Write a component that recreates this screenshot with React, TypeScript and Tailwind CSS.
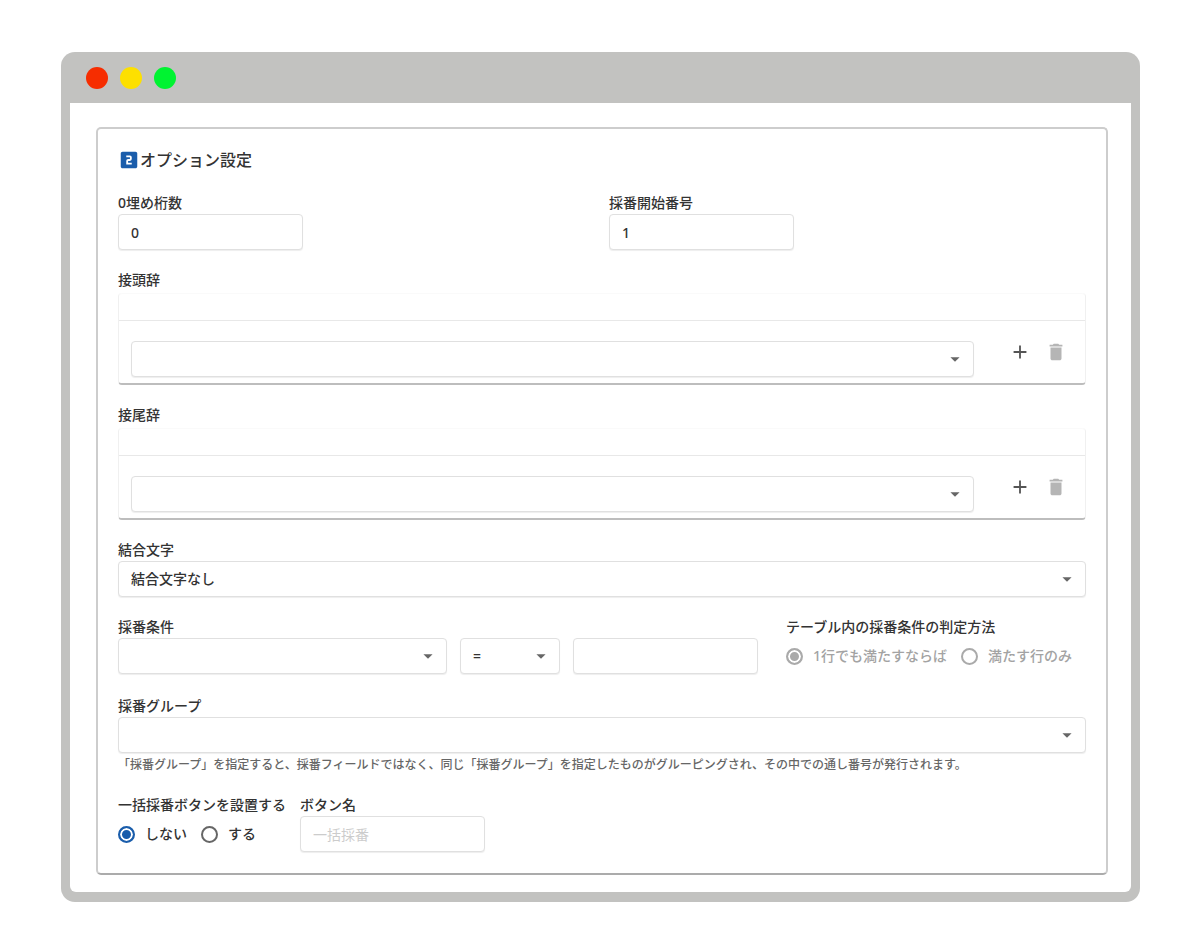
import { useState } from "react";
import type { ReactNode } from "react";
import { MdAdd, MdArrowDropDown, MdDelete, MdLooksTwo } from "react-icons/md";

const fieldClass =
  "h-9 w-full rounded-[4px] border border-[#e0e0e0] bg-white px-3 text-sm font-medium text-[#333] shadow-[0_1px_1px_#eeeeee] outline-none focus:border-[#1a5dab]";

type FieldProps = {
  label: string;
  htmlFor: string;
  className?: string;
  children: ReactNode;
};

function Field({ label, htmlFor, className = "", children }: FieldProps) {
  return (
    <div className={className}>
      <label htmlFor={htmlFor} className="block pb-0.5 leading-[18px] whitespace-nowrap">
        {label}
      </label>
      {children}
    </div>
  );
}

type SelectProps = {
  id: string;
  options: string[];
  label?: string;
};

function Select({ id, options, label }: SelectProps) {
  return (
    <div className="grid w-full items-center">
      <select id={id} aria-label={label} className={`${fieldClass} col-start-1 row-start-1 appearance-none`}>
        {options.map((option) => (
          <option key={option}>{option}</option>
        ))}
      </select>
      <MdArrowDropDown
        size={22}
        className="pointer-events-none col-start-1 row-start-1 mr-2 justify-self-end text-[#666]"
        aria-hidden="true"
      />
    </div>
  );
}

type RadioProps = {
  name: string;
  label: string;
  checked: boolean;
  disabled?: boolean;
  onChange: () => void;
};

function Radio({ name, label, checked, disabled = false, onChange }: RadioProps) {
  return (
    <label className={`flex items-center gap-2.5 whitespace-nowrap ${disabled ? "text-[#a3a3a3]" : ""}`}>
      <input
        type="radio"
        name={name}
        checked={checked}
        disabled={disabled}
        onChange={onChange}
        className="size-[17px] shrink-0 appearance-none rounded-full border-2 border-[#666] bg-white checked:border-[#1a5dab] checked:bg-[#1a5dab] checked:shadow-[inset_0_0_0_2px_#fff] disabled:border-[#aaa] checked:disabled:bg-[#aaa]"
      />
      {label}
    </label>
  );
}

function AffixTable({ id, label }: { id: string; label: string }) {
  return (
    <Field label={label} htmlFor={id}>
      <div className="mt-0.5 rounded-[4px] border-x border-b-2 border-x-[#f0f0f0] border-b-[#bdbdbd]">
        <div className="h-7 rounded-t-[4px] border-t border-b border-t-[#fafafa] border-b-[#e8e8e8]" />
        <div className="flex items-start pt-[13px] pr-[11px] pb-[6px] pl-3">
          <div className="flex-1 pt-[7px]">
            <Select id={id} options={[""]} />
          </div>
          <div className="ml-7 flex text-[#555]">
            <button type="button" aria-label="追加" className="flex size-9 items-center justify-center">
              <MdAdd size={22} />
            </button>
            <button
              type="button"
              aria-label="削除"
              disabled
              className="flex size-9 items-center justify-center text-[#b5b5b5]"
            >
              <MdDelete size={22} />
            </button>
          </div>
        </div>
      </div>
    </Field>
  );
}

export default function App() {
  const [bulkButton, setBulkButton] = useState(false);
  const [anyRow, setAnyRow] = useState(true);

  return (
    <div className="min-h-screen bg-white py-[52px] pr-[60px] pl-[61px] font-['Noto_Sans','Noto_Sans_CJK_JP',sans-serif] text-sm font-medium text-[#333]">
      <div className="rounded-[14px] bg-[#c2c2c0] px-[9px] pb-[10px]">
        <div className="flex h-[51px] items-center gap-3 px-4">
          <span className="size-[22px] rounded-full bg-[#f62d00]" />
          <span className="size-[22px] rounded-full bg-[#fde000]" />
          <span className="size-[22px] rounded-full bg-[#00f331]" />
        </div>

        <div className="rounded-b-md bg-white pt-6 pr-[23px] pb-[17px] pl-[26px]">
          <form className="flex flex-col gap-[21px] rounded-[5px] border-2 border-[#cdcdcd] border-b-[#ababab] px-5 pt-[19px] pb-[21px]">
            <h1 className="mb-px flex items-center text-base leading-6 font-medium">
              <MdLooksTwo size={22} className="text-[#1a5dab]" aria-hidden="true" />
              オプション設定
            </h1>

            <div className="grid grid-cols-2 gap-3.5">
              <Field label="0埋め桁数" htmlFor="digits" className="w-[185px]">
                <input id="digits" type="text" defaultValue="0" className={fieldClass} />
              </Field>
              <Field label="採番開始番号" htmlFor="start" className="w-[185px]">
                <input id="start" type="text" defaultValue="1" className={fieldClass} />
              </Field>
            </div>

            <AffixTable id="prefix" label="接頭辞" />
            <AffixTable id="suffix" label="接尾辞" />

            <Field label="結合文字" htmlFor="joiner">
              <Select id="joiner" options={["結合文字なし"]} />
            </Field>

            <div className="flex">
              <Field label="採番条件" htmlFor="condition" className="flex-1">
                <div className="flex gap-[13px]">
                  <div className="flex-1">
                    <Select id="condition" options={[""]} />
                  </div>
                  <div className="w-[100px]">
                    <Select id="operator" label="演算子" options={["="]} />
                  </div>
                  <div className="w-[185px]">
                    <input type="text" aria-label="条件の値" className={fieldClass} />
                  </div>
                </div>
              </Field>
              <fieldset className="ml-7 w-[300px] pb-0.5">
                <legend className="pb-0.5 leading-[18px]">テーブル内の採番条件の判定方法</legend>
                <div className="flex h-9 items-center gap-3.5">
                  <Radio
                    name="judge"
                    label="1行でも満たすならば"
                    checked={anyRow}
                    disabled
                    onChange={() => setAnyRow(true)}
                  />
                  <Radio
                    name="judge"
                    label="満たす行のみ"
                    checked={!anyRow}
                    disabled
                    onChange={() => setAnyRow(false)}
                  />
                </div>
              </fieldset>
            </div>

            <div>
              <Field label="採番グループ" htmlFor="group">
                <Select id="group" options={[""]} />
              </Field>
              <p className="mt-0.5 text-xs leading-5 text-[#666]">
                「採番グループ」を指定すると、採番フィールドではなく、同じ「採番グループ」を指定したものがグルーピングされ、その中での通し番号が発行されます。
              </p>
            </div>

            <div className="flex gap-3.5">
              <fieldset>
                <legend className="pb-0.5 leading-[18px]">一括採番ボタンを設置する</legend>
                <div className="flex h-9 items-center gap-3.5">
                  <Radio name="bulk" label="しない" checked={!bulkButton} onChange={() => setBulkButton(false)} />
                  <Radio name="bulk" label="する" checked={bulkButton} onChange={() => setBulkButton(true)} />
                </div>
              </fieldset>
              <Field label="ボタン名" htmlFor="button-name" className="w-[185px]">
                <input
                  id="button-name"
                  type="text"
                  placeholder="一括採番"
                  className={`${fieldClass} placeholder:font-normal placeholder:text-[#ccc]`}
                />
              </Field>
            </div>
          </form>
        </div>
      </div>
    </div>
  );
}
